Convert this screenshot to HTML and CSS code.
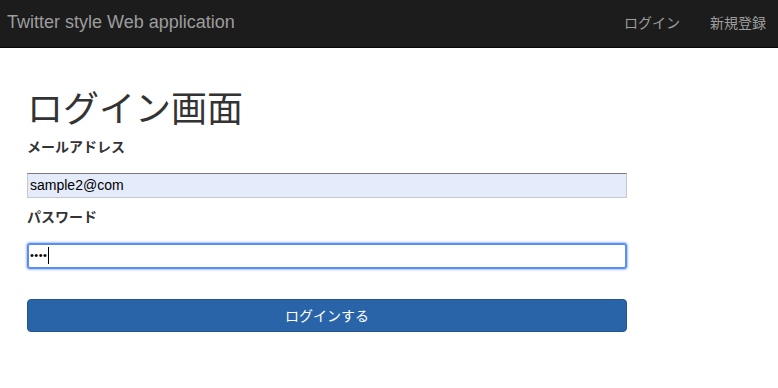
FILE: index.html
```html
<!DOCTYPE html>
<html lang="ja">
<head>
    <meta charset="UTF-8">
    <meta name="viewport" content="width=device-width, initial-scale=1.0">
    <title>ログイン</title>
    <link rel="stylesheet" href="styles.css">
</head>
<body>
    <div class="navbar">
        <a href="#" class="brand">Twitter style Web application</a>
        <div class="nav-links">
            <a href="#">ログイン</a>
            <a href="#">新規登録</a>
        </div>
    </div>
    <div class="container">
        <h1 class="title">ログイン画面</h1>
        <form class="login-form" onsubmit="return false">
            <label class="label" for="email">メールアドレス</label>
            <input type="text" id="email" class="input-item autofill" value="sample2@com">
            <label class="label label-pw" for="password">パスワード</label>
            <div class="input-item focused" id="password"><span class="dots">••••</span><span class="caret"></span></div>
            <button class="btn">ログインする</button>
        </form>
    </div>
</body>
</html>
```

FILE: styles.css
```css
* {
    margin: 0;
    padding: 0;
    box-sizing: border-box;
}
body {
    font-family: "Liberation Sans", "Noto Sans CJK JP", sans-serif;
    font-size: 14px;
    color: #333;
    background-color: #fff;
}
a {
    text-decoration: none;
}
.navbar {
    height: 48px;
    background-color: #1c1c1c;
    border-bottom: 1px solid #080808;
    display: flex;
    align-items: center;
    justify-content: space-between;
    padding: 0 12px 0 7px;
}
.brand {
    font-size: 18px;
    color: #9d9d9d;
    margin-top: -2px;
}
.nav-links {
    display: flex;
    gap: 30px;
    margin-top: -3px;
}
.nav-links a {
    color: #9d9d9d;
    font-size: 14px;
}
.container {
    padding: 0 27px;
}
.title {
    font-family: "Noto Sans CJK JP", sans-serif;
    font-size: 36px;
    font-weight: normal;
    line-height: 1.1;
    margin-top: 39px;
    color: #333;
}
.login-form {
    width: 600px;
    display: flex;
    flex-direction: column;
}
.label {
    font-weight: bold;
    font-size: 14px;
    line-height: 20px;
    margin-top: 10px;
    margin-bottom: 16px;
}
.label-pw {
    margin-top: 9px;
    margin-bottom: 16px;
}
.input-item {
    display: block;
    width: 100%;
    height: 25px;
    border: 1px solid #c8c8c8;
    padding: 0 2px;
    font-family: "Liberation Sans", sans-serif;
    font-size: 14px;
    color: #000;
    outline: none;
}
.autofill {
    background-color: #e4ebfb;
    border-top-color: #7a7a7a;
}
.focused {
    display: flex;
    align-items: center;
    border: 2px solid #5a8ef0;
    box-shadow: 0 0 2px 1px #a9c4f5;
    border-radius: 3px;
    height: 26px;
    padding-left: 1px;
}
.dots {
    font-size: 11px;
    letter-spacing: 0.5px;
    line-height: 1;
}
.caret {
    display: inline-block;
    width: 1px;
    height: 17px;
    background-color: #000;
    margin-left: 1px;
}
.btn {
    margin-top: 30px;
    height: 33px;
    background-color: #2964a8;
    border: 1px solid #22558f;
    border-radius: 4px;
    color: #fff;
    font-family: "Noto Sans CJK JP", sans-serif;
    font-size: 14px;
    cursor: pointer;
}
```
